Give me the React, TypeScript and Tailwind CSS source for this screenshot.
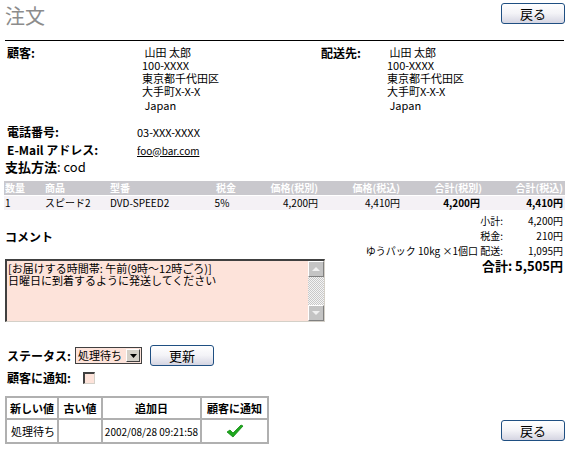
import React from "react";

const F = { fontFamily: '"Noto Sans CJK JP", "Liberation Sans", sans-serif' };

function Btn({ label, className = "" }: { label: string; className?: string }) {
  return (
    <div
      className={
        "flex items-center justify-center w-[64px] h-[21px] rounded-[3px] border border-[#1f4f82] bg-gradient-to-b from-white via-[#f3f3f7] to-[#d5d5e2] text-[13px] text-black leading-none " +
        className
      }
    >
      {label}
    </div>
  );
}

function Check() {
  return (
    <svg width="18" height="14" viewBox="0 0 18 14">
      <path d="M1 8 L4 6 L7 9 L15 1 L17 2 L7 13 Z" fill="#1ea81e" stroke="#118a11" strokeWidth="0.8" />
    </svg>
  );
}

function Addr() {
  return (
    <div className="leading-[13px]">
      <div className="h-[13px]">&nbsp;山田 太郎</div>
      <div className="h-[13px]">100-XXXX</div>
      <div className="h-[13px]">東京都千代田区</div>
      <div className="h-[13px]">大手町X-X-X</div>
      <div className="h-[13px] mt-[1px]">&nbsp;Japan</div>
    </div>
  );
}

export default function App() {
  const cols = "grid grid-cols-[41px_65px_90px_52px_68px_82px_82px_81px]";
  return (
    <div className="w-[569px] h-[454px] bg-white text-black overflow-hidden" style={F}>
      {/* header */}
      <div className="flex justify-between items-start pl-[5px] pr-[4px] pt-[3px]">
        <div className="text-[20px] leading-[24px] text-[#8c8c8c] mt-[1px]">注文</div>
        <Btn label="戻る" />
      </div>
      <div className="mx-[5px] mt-[12px] h-px bg-black" />

      {/* addresses */}
      <div className="flex pl-[7px] mt-[5px] text-[11px] leading-[13px]">
        <div className="w-[135px] font-bold text-[12px]">顧客:</div>
        <div className="w-[179px]">
          <Addr />
        </div>
        <div className="w-[66px] font-bold text-[12px]">配送先:</div>
        <Addr />
      </div>

      {/* phone / email */}
      <div className="pl-[7px] mt-[11px] text-[12px]">
        <div className="flex items-center h-[18px]">
          <div className="w-[130px] font-bold">電話番号:</div>
          <div className="text-[11px]">03-XXX-XXXX</div>
        </div>
        <div className="flex items-center h-[18px]">
          <div className="w-[130px] font-bold">E-Mail アドレス:</div>
          <div className="text-[10px] underline">foo@bar.com</div>
        </div>
      </div>
      <div className="pl-[5px] h-[16px] flex items-center text-[13px] whitespace-nowrap">
        <span className="font-bold">支払方法</span>
        <span>: cod</span>
      </div>

      {/* products table */}
      <div className="ml-[4px] mt-[6px] w-[561px] text-[10px] leading-[14px] whitespace-nowrap">
        <div className={cols + " bg-[#c9c8cd] text-white font-bold h-[14px]"}>
          <div className="pl-[1px]">数量</div>
          <div>商品</div>
          <div>型番</div>
          <div className="text-center">税金</div>
          <div className="text-right pr-[2px]">価格(税別)</div>
          <div className="text-right pr-[2px]">価格(税込)</div>
          <div className="text-right pr-[2px]">合計(税別)</div>
          <div className="text-right pr-[2px]">合計(税込)</div>
        </div>
        <div className={cols + " bg-[#f4f1f5] h-[14px] mt-px"}>
          <div className="pl-[1px]">1</div>
          <div>スピード2</div>
          <div>DVD-SPEED2</div>
          <div className="text-center pr-[8px]">5%</div>
          <div className="text-right pr-[2px]">4,200円</div>
          <div className="text-right pr-[2px]">4,410円</div>
          <div className="text-right pr-[4px] font-bold">4,200円</div>
          <div className="text-right pr-[2px] font-bold">4,410円</div>
        </div>
      </div>

      {/* comment + totals */}
      <div className="flex mt-[3px]">
        <div className="pl-[5px] w-[330px]">
          <div className="mt-[17px] text-[12px] leading-[14px] font-bold">コメント</div>
          <div className="mt-[15px] w-[320px] h-[63px] flex border-t-2 border-l-2 border-t-[#404040] border-l-[#404040] border-r border-b border-r-[#d4d0c8] border-b-[#d4d0c8] bg-[#fde3da]">
            <div className="flex-1 text-[11px] leading-[12px] pl-[1px] pt-[1px] whitespace-nowrap">
              <div className="h-[12px]">[お届けする時間帯: 午前(9時～12時ごろ)]</div>
              <div className="h-[12px]">日曜日に到着するように発送してください</div>
            </div>
            <div
              className="w-[16px] h-full flex flex-col justify-between bg-[#e8e8e8]"
              style={{
                backgroundImage:
                  "repeating-conic-gradient(#c8c8c8 0% 25%, #f4f4f4 0% 50%)",
                backgroundSize: "2px 2px",
              }}
            >
              <div className="h-[16px] bg-[#c4c4c4] border-t border-l border-white border-r border-b border-r-[#808080] border-b-[#808080] flex items-center justify-center">
                <svg width="8" height="5" viewBox="0 0 8 5"><path d="M4 0 L8 4 L0 4 Z" fill="#f0f0f0" /></svg>
              </div>
              <div className="h-[16px] bg-[#c4c4c4] border-t border-l border-white border-r border-b border-r-[#808080] border-b-[#808080] flex items-center justify-center">
                <svg width="8" height="5" viewBox="0 0 8 5"><path d="M0 0 L8 0 L4 4 Z" fill="#f0f0f0" /></svg>
              </div>
            </div>
          </div>
        </div>
        <div className="flex-1 flex flex-col items-end pr-[6px] text-[10px] leading-[15px] whitespace-nowrap">
          <div className="flex"><div>小計:</div><div className="w-[60px] text-right">4,200円</div></div>
          <div className="flex"><div>税金:</div><div className="w-[60px] text-right">210円</div></div>
          <div className="flex"><div>ゆうパック 10kg ×1個口 配送:</div><div className="w-[60px] text-right">1,095円</div></div>
          <div className="font-bold text-[13px] leading-[15px]">合計: 5,505円</div>
        </div>
      </div>

      {/* status */}
      <div className="flex items-center pl-[7px] mt-[23px] h-[21px] whitespace-nowrap">
        <div className="text-[12px] font-bold w-[68px]">ステータス:</div>
        <div className="w-[67px] h-[17px] flex items-center border border-[#404040] bg-[#fde3da] text-[11px]">
          <div className="flex-1 pl-[2px] leading-none">処理待ち</div>
          <div className="w-[14px] h-[13px] mr-[1px] bg-[#d4d0c8] border-t border-l border-white border-r border-b border-r-[#404040] border-b-[#404040] flex items-center justify-center">
            <svg width="7" height="4" viewBox="0 0 7 4"><path d="M0 0 L7 0 L3.5 4 Z" fill="#000" /></svg>
          </div>
        </div>
        <Btn label="更新" className="ml-[8px]" />
      </div>
      <div className="flex items-center pl-[7px] mt-[4px] h-[16px] whitespace-nowrap">
        <div className="text-[12px] font-bold w-[76px]">顧客に通知:</div>
        <div className="w-[12px] h-[12px] border-t-2 border-l-2 border-t-[#404040] border-l-[#404040] border-r border-b border-r-[#d4d0c8] border-b-[#d4d0c8] bg-[#fde3da]" />
      </div>

      {/* history */}
      <table className="ml-[5px] mt-[10px] border-collapse border-2 border-[#9a9a9a] text-[11px] whitespace-nowrap">
        <thead>
          <tr className="h-[22px]">
            <th className="w-[52px] border-2 border-[#b0b0b0] font-bold text-center">新しい値</th>
            <th className="w-[44px] border-2 border-[#b0b0b0] font-bold text-center">古い値</th>
            <th className="w-[99px] border-2 border-[#b0b0b0] font-bold text-center">追加日</th>
            <th className="w-[67px] border-2 border-[#b0b0b0] font-bold text-center">顧客に通知</th>
          </tr>
        </thead>
        <tbody>
          <tr className="h-[24px]">
            <td className="border-2 border-[#b0b0b0] pl-[4px]">処理待ち</td>
            <td className="border-2 border-[#b0b0b0]"></td>
            <td className="border-2 border-[#b0b0b0] text-center text-[10px]">2002/08/28 09:21:58</td>
            <td className="border-2 border-[#b0b0b0]"><div className="flex justify-center"><Check /></div></td>
          </tr>
        </tbody>
      </table>
      <div className="flex justify-end pr-[4px] -mt-[24px]">
        <Btn label="戻る" />
      </div>
    </div>
  );
}
